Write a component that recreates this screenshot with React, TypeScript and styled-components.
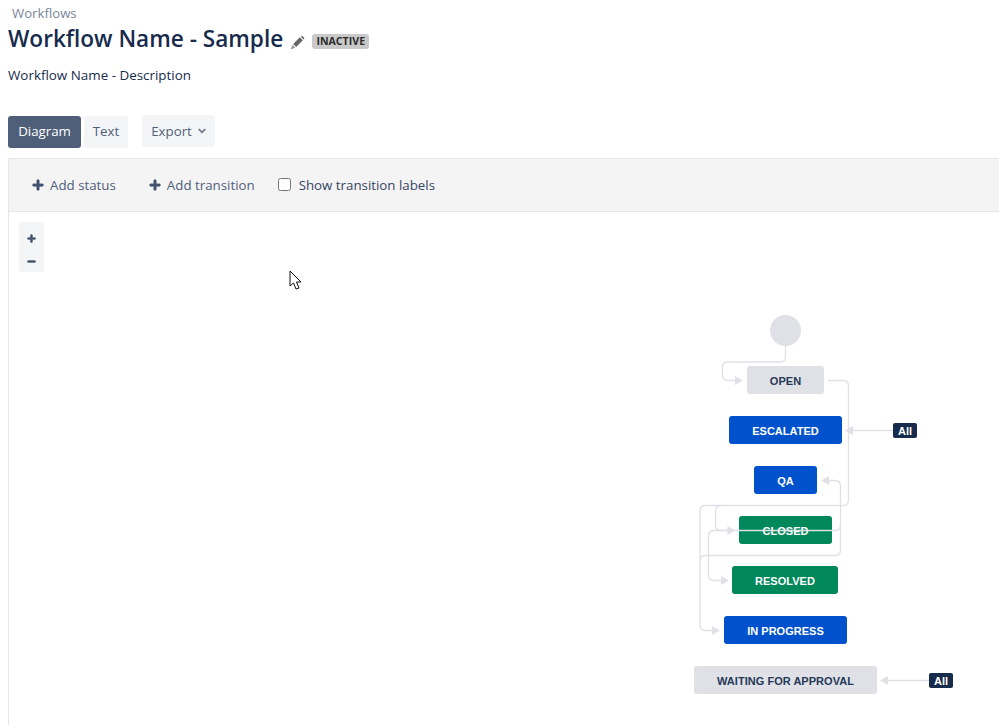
import React from 'react';
import styled, { createGlobalStyle } from 'styled-components';
import { FaPlus, FaMinus, FaChevronDown } from 'react-icons/fa';

const GlobalStyle = createGlobalStyle`
    html, body {
        margin: 0;
        padding: 0;
        background: #fff;
        overflow: hidden;
    }
    body {
        font-family: 'Open Sans', 'Noto Sans', sans-serif;
        color: #172b4d;
    }
`;

const Page = styled.div`
    width: 999px;
    height: 725px;
    padding: 6px 0 0 8px;
    box-sizing: border-box;
    overflow: hidden;
`;

const Breadcrumb = styled.div`
    font-size: 13.2px;
    line-height: 15px;
    color: #7a869a;
    padding-left: 4px;
`;

const TitleRow = styled.div`
    display: flex;
    align-items: center;
    height: 30px;
    margin-top: 2px;
`;

const Title = styled.h1`
    margin: 2px 0 0;
    font-size: 22.6px;
    font-weight: 600;
    line-height: 30px;
    color: #172b4d;
    white-space: nowrap;
`;

const EditIcon = styled.svg`
    width: 15px;
    height: 15px;
    margin: 8px 0 0 7px;
`;

const Lozenge = styled.span`
    margin: 6px 0 0 7px;
    width: 57px;
    height: 15px;
    line-height: 15px;
    text-align: center;
    border-radius: 3px;
    background: #c9c9c9;
    color: #2b2b2b;
    font-size: 10.6px;
    font-weight: 700;
    white-space: nowrap;
`;

const Description = styled.p`
    margin: 13px 0 0;
    font-size: 13.4px;
    line-height: 18px;
    color: #172b4d;
`;

const Tabs = styled.div`
    display: flex;
    align-items: flex-start;
    margin-top: 32px;
`;

const Tab = styled.button<{ $active?: boolean; $width: number }>`
    width: ${(props) => props.$width}px;
    height: 32px;
    padding: 0 0 2px;
    margin-right: 3px;
    border: none;
    border-radius: 3px;
    font: inherit;
    font-size: 13.3px;
    background: ${(props) => (props.$active ? '#505f79' : '#f4f5f7')};
    color: ${(props) => (props.$active ? '#fff' : '#505f79')};
`;

const ExportButton = styled(Tab)`
    display: flex;
    align-items: center;
    justify-content: center;
    gap: 6px;
    margin: -1px 0 0 11px;
    padding: 0;
    svg {
        width: 8px;
        height: 8px;
        color: #6b778c;
        stroke: currentColor;
        stroke-width: 40;
    }
`;

const Panel = styled.div`
    margin-top: 10px;
    border-left: 1px solid #e6e6e6;
    height: 570px;
`;

const Toolbar = styled.div`
    display: flex;
    align-items: center;
    height: 52px;
    padding-left: 23px;
    background: #f4f4f5;
    border-top: 1px solid #e6e6e6;
    border-bottom: 1px solid #e6e6e6;
    font-size: 13.3px;
`;

const ToolButton = styled.span`
    display: flex;
    align-items: center;
    gap: 6px;
    margin-right: 33px;
    color: #505f79;
    svg {
        width: 12px;
        height: 12px;
        color: #42526e;
        stroke: currentColor;
        stroke-width: 30;
    }
`;

const CheckLabel = styled.label`
    display: flex;
    align-items: center;
    gap: 8px;
    margin-left: -10px;
    color: #344563;
`;

const Check = styled.input`
    width: 13px;
    height: 13px;
    margin: 0 0 2px;
`;

const Canvas = styled.div`
    position: relative;
    height: 510px;
`;

const ZoomBox = styled.div`
    position: absolute;
    left: 10px;
    top: 10px;
    width: 25px;
    height: 50px;
    box-sizing: border-box;
    padding-top: 5px;
    display: flex;
    flex-direction: column;
    gap: 1px;
    background: #f4f5f7;
    border-radius: 3px;
`;

const ZoomButton = styled.span`
    height: 22px;
    display: flex;
    align-items: center;
    justify-content: center;
    color: #42526e;
    svg {
        width: 9px;
        height: 9px;
        stroke: currentColor;
        stroke-width: 40;
    }
`;

const Cursor = styled.svg`
    position: absolute;
    left: 280px;
    top: 58px;
`;

const Edges = styled.svg`
    position: absolute;
    left: -9px;
    top: -212px;
    width: 999px;
    height: 725px;
    pointer-events: none;
`;

const StartNode = styled.div`
    position: absolute;
    left: 761px;
    top: 103px;
    width: 31px;
    height: 31px;
    border-radius: 50%;
    background: #dfe1e6;
`;

const kinds = {
    grey: { bg: '#dfe1e6', fg: '#253858' },
    blue: { bg: '#0052cc', fg: '#fff' },
    green: { bg: '#00875a', fg: '#fff' },
};

const Node = styled.div<{ $kind: keyof typeof kinds }>`
    position: absolute;
    height: 28px;
    padding-top: 1px;
    display: flex;
    align-items: center;
    justify-content: center;
    box-sizing: border-box;
    border-radius: 3px;
    background: ${(props) => kinds[props.$kind].bg};
    color: ${(props) => kinds[props.$kind].fg};
    font-family: 'Liberation Sans', Arial, sans-serif;
    font-size: 11px;
    font-weight: 700;
    letter-spacing: 0.03px;
    white-space: nowrap;
`;

const AllTag = styled.span`
    position: absolute;
    width: 24px;
    height: 15px;
    display: flex;
    align-items: center;
    justify-content: center;
    border-radius: 2px;
    background: #172b4d;
    color: #fff;
    font-family: 'Liberation Sans', Arial, sans-serif;
    font-size: 11px;
    font-weight: 700;
`;

// page coordinates, the canvas origin is (9, 212)
const nodes = [
    { label: 'OPEN', kind: 'grey', x: 747, y: 366, w: 77 },
    { label: 'ESCALATED', kind: 'blue', x: 729, y: 416, w: 113 },
    { label: 'QA', kind: 'blue', x: 754, y: 466, w: 63 },
    { label: 'CLOSED', kind: 'green', x: 739, y: 516, w: 93 },
    { label: 'RESOLVED', kind: 'green', x: 732, y: 566, w: 106 },
    { label: 'IN PROGRESS', kind: 'blue', x: 724, y: 616, w: 123 },
    { label: 'WAITING FOR APPROVAL', kind: 'grey', x: 694, y: 666, w: 183 },
] as const;

const lines = [
    'M785.5 346 V357 Q785.5 362 780 362 H728 Q722.5 362 722.5 367 V375 Q722.5 380.5 728 380.5 H736',
    'M828 380.5 H843 Q848.5 380.5 848.5 386 V500 Q848.5 505.5 843 505.5 H705.5 Q700 505.5 700 511 V625 Q700 630.5 705.5 630.5 H713',
    'M893 430.5 H853',
    'M828 480.5 H835 Q840.5 480.5 840.5 486 V550 Q840.5 555.5 835 555.5 H705.5 Q700 555.5 700 561',
    'M721 505.5 Q715.5 505.5 715.5 511 V525 Q715.5 530.5 721 530.5 H728',
    'M840.5 525 Q840.5 530.5 835 530.5 H714 Q708.5 530.5 708.5 536 V575 Q708.5 580.5 714 580.5 H722',
    'M929 680.5 H888',
];

const arrows = [
    [743, 380.5],
    [845, 430.5, true],
    [821, 480.5, true],
    [735.5, 530.5],
    [729, 580.5],
    [720, 630.5],
    [880, 680.5, true],
] as const;

const App = () => (
    <Page>
        <GlobalStyle />
        <Breadcrumb>Workflows</Breadcrumb>
        <TitleRow>
            <Title>Workflow Name - Sample</Title>
            <EditIcon viewBox="0 0 14 14">
                <path d="M3 8.4 L9.2 2.2 L12 5 L5.8 11.2 Z" fill="#666" />
                <path
                    d="M10 1.4 Q11 .4 12.2 1.4 L12.8 2 Q13.8 3.2 12.8 4.2 Z"
                    fill="#666"
                />
                <path d="M2.4 9.2 L5 11.8 L.6 13.6 Z" fill="#999" />
            </EditIcon>
            <Lozenge>INACTIVE</Lozenge>
        </TitleRow>
        <Description>Workflow Name - Description</Description>
        <Tabs>
            <Tab $active $width={73}>
                Diagram
            </Tab>
            <Tab $width={44}>Text</Tab>
            <ExportButton $width={73}>
                Export <FaChevronDown />
            </ExportButton>
        </Tabs>
        <Panel>
            <Toolbar>
                <ToolButton>
                    <FaPlus /> Add status
                </ToolButton>
                <ToolButton>
                    <FaPlus /> Add transition
                </ToolButton>
                <CheckLabel>
                    <Check type="checkbox" /> Show transition labels
                </CheckLabel>
            </Toolbar>
            <Canvas>
                <ZoomBox>
                    <ZoomButton>
                        <FaPlus />
                    </ZoomButton>
                    <ZoomButton>
                        <FaMinus />
                    </ZoomButton>
                </ZoomBox>
                <StartNode />
                {nodes.map((n) => (
                    <Node
                        key={n.label}
                        $kind={n.kind}
                        style={{ left: n.x - 9, top: n.y - 212, width: n.w }}
                    >
                        {n.label}
                    </Node>
                ))}
                <Edges viewBox="0 0 999 725">
                    <g fill="none" stroke="#dfe1e6" strokeWidth="1.3">
                        {lines.map((d) => (
                            <path key={d} d={d} />
                        ))}
                    </g>
                    {arrows.map(([x, y, left]) => (
                        <polygon
                            key={`${x}-${y}`}
                            fill="#dfe1e6"
                            points={
                                left
                                    ? `${x},${y} ${x + 8},${y - 4.5} ${x + 8},${y + 4.5}`
                                    : `${x},${y} ${x - 8},${y - 4.5} ${x - 8},${y + 4.5}`
                            }
                        />
                    ))}
                </Edges>
                <AllTag style={{ left: 884, top: 211 }}>All</AllTag>
                <AllTag style={{ left: 920, top: 461 }}>All</AllTag>
                <Cursor width="16" height="21" viewBox="0 0 16 21">
                    <path
                        d="M1 1 V16 L4.5 13 L7 19 L10 18 L7.5 12 H12 Z"
                        fill="#fff"
                        stroke="#111"
                        strokeWidth="1"
                    />
                </Cursor>
            </Canvas>
        </Panel>
    </Page>
);

export default App;
